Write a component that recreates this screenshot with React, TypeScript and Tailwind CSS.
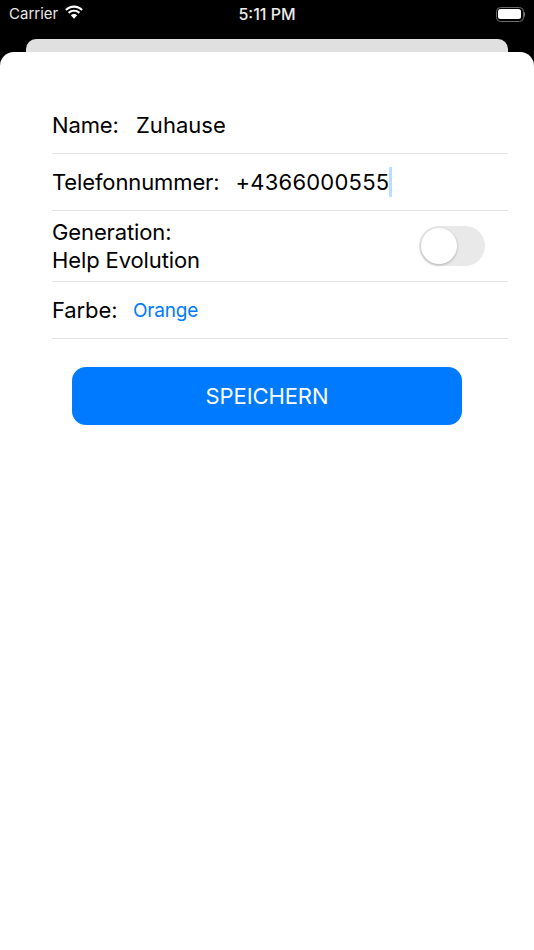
import { useState } from 'react'

const font = { fontFamily: 'Inter, "Liberation Sans", sans-serif' }

function StatusBar() {
  return (
    <div className="h-[39px] flex items-start justify-between pl-[9px] pr-[9px] pt-[3px] text-white">
      <div className="flex items-center gap-[6px] w-[120px]">
        <span className="text-[15px] leading-[22px] text-[#e8e8e8]">Carrier</span>
        <svg width="20" height="16" viewBox="0 0 19 15" fill="white" className="mb-[3px]">
          <path d="M9.5 2.6c2.7 0 5.1 1 7 2.8l1.4-1.5C15.7 1.700 12.700.4 9.500.4S3.300 1.700 1.100 3.900l1.400 1.500c1.900-1.800 4.300-2.800 7-2.800z" />
          <path d="M9.500 6.400c1.700 0 3.200.6 4.400 1.700l1.400-1.500c-1.500-1.500-3.600-2.300-5.800-2.300s-4.300.8-5.800 2.300l1.400 1.500c1.200-1.100 2.700-1.700 4.400-1.700z" />
          <path d="M9.500 8.500c-1.100 0-2.200.4-3 1.200l3 3.200 3-3.200c-.8-.8-1.900-1.200-3-1.200z" />
        </svg>
      </div>
      <span className="text-[16px] leading-[22px] font-medium text-[#ececec]">5:11 PM</span>
      <div className="w-[120px] flex justify-end items-center h-[22px]">
        <div className="w-[28px] h-[15px] rounded-[4.500px] border border-[#6b6b6b] p-[1.500px]">
          <div className="w-full h-full rounded-[2.500px] bg-white" />
        </div>
        <div className="w-[1.500px] h-[5px] bg-[#6b6b6b] rounded-r-sm" />
      </div>
    </div>
  )
}

function Row({ className, children }: { className: string; children: React.ReactNode }) {
  return <div className={`flex items-center border-b border-[#e4e4e6] ${className}`}>{children}</div>
}

export default function App() {
  const [generation, setGeneration] = useState(false)

  return (
    <div className="h-[950px] bg-black flex flex-col overflow-hidden text-black" style={font}>
      <StatusBar />
      <div className="mx-[26px] h-[13px] bg-[#e0e0e0] rounded-t-[10px] shrink-0" />
      <div className="flex-1 bg-white rounded-t-[14px] pt-[45px]">
        <div className="ml-[52px] mr-[26px] text-[22px] tracking-[-0.12px]">
          <Row className="h-[57px]">
            <span className="w-[84px]">Name:</span>
            <span className="tracking-[0.03px]">Zuhause</span>
          </Row>
          <Row className="h-[57px]">
            <span className="w-[183.500px]">Telefonnummer:</span>
            <span className="tracking-[0.22px]">+4366000555</span>
            <span className="w-[3px] h-[30px] bg-[#bcdcff] shrink-0" />
          </Row>
          <Row className="h-[71px] justify-between">
            <span className="leading-[28px]">
              Generation:
              <br />
              Help Evolution
            </span>
            <button
              type="button"
              onClick={() => setGeneration(!generation)}
              className="w-[66px] h-[40px] mr-[23px] rounded-full bg-[#e9e9ea] p-[2px] flex"
            >
              <span className="w-[36px] h-[36px] rounded-full bg-white shadow-[0_1px_3px_rgba(0,0,0,0.25)]" />
            </button>
          </Row>
          <Row className="h-[57px]">
            <span className="w-[81px]">Farbe:</span>
            <span className="text-[19px] tracking-[-0.2px] text-[#007aff] mt-[2px]">Orange</span>
          </Row>
        </div>
        <button
          type="button"
          className="block ml-[72px] mt-[28px] w-[390px] h-[58px] rounded-[14px] bg-[#007aff] text-white text-[22px] tracking-[-0.1px]"
        >
          SPEICHERN
        </button>
      </div>
    </div>
  )
}
